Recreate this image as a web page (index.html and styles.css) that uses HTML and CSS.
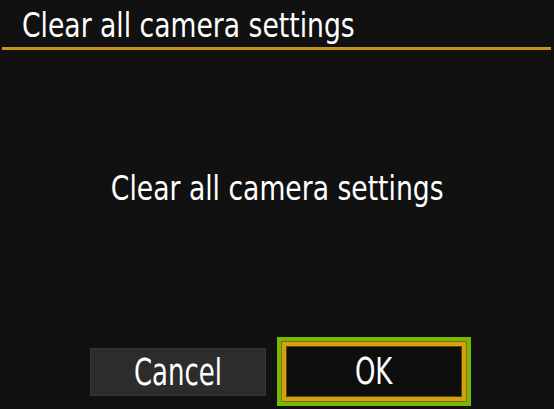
FILE: index.html
```html
<!DOCTYPE html>
<html lang="en">
<head>
<meta charset="utf-8">
<title>Clear all camera settings</title>
<link rel="stylesheet" href="styles.css">
</head>
<body>
<div class="screen">
  <header class="title"><span class="txt title-txt">Clear all camera settings</span></header>
  <main class="msg"><span class="txt msg-txt">Clear all camera settings</span></main>
  <footer class="actions">
    <div class="btn cancel"><span class="txt btn-txt">Cancel</span></div>
    <div class="focus">
      <div class="btn ok"><span class="txt btn-txt">OK</span></div>
    </div>
  </footer>
</div>
</body>
</html>
```
FILE: styles.css
```css
html, body {
  margin: 0;
  padding: 0;
  background: #111111;
}
.screen {
  width: 554px;
  height: 409px;
  display: flex;
  flex-direction: column;
  background: #111111;
  color: #ffffff;
  font-family: "DejaVu Sans", "Liberation Sans", sans-serif;
  font-stretch: condensed;
  overflow: hidden;
}
.txt {
  display: inline-block;
  white-space: nowrap;
}
.title {
  margin: 0 3px 0 2px;
  padding: 8px 0 5px 20px;
  border-bottom: 3px solid #c8951a;
  font-size: 34px;
  line-height: 34px;
}
.title-txt {
  transform: scaleX(0.87);
  transform-origin: left center;
}
.msg {
  margin-top: 121px;
  text-align: center;
  font-size: 34px;
  line-height: 34px;
}
.msg-txt {
  transform: scaleX(0.87);
  transform-origin: center center;
}
.actions {
  margin-top: 132px;
  padding-left: 90px;
  display: flex;
  align-items: center;
  gap: 11px;
}
.btn {
  box-sizing: border-box;
  display: flex;
  justify-content: center;
  font-size: 38px;
}
.btn-txt {
  transform: scaleX(0.76);
  transform-origin: center center;
}
.cancel {
  width: 176px;
  height: 48px;
  line-height: 46px;
  background: #2c2c2c;
  border: 1px solid #363636;
}
.focus {
  box-sizing: border-box;
  width: 194px;
  height: 69px;
  border: 5px solid #76b900;
}
.ok {
  width: 184px;
  height: 59px;
  line-height: 51px;
  background: #0e0e0e;
  border: 4px solid #d4a00f;
  box-shadow: inset 0 0 0 1px #5a4410, 0 0 0 1px #8a6a10;
}
```
